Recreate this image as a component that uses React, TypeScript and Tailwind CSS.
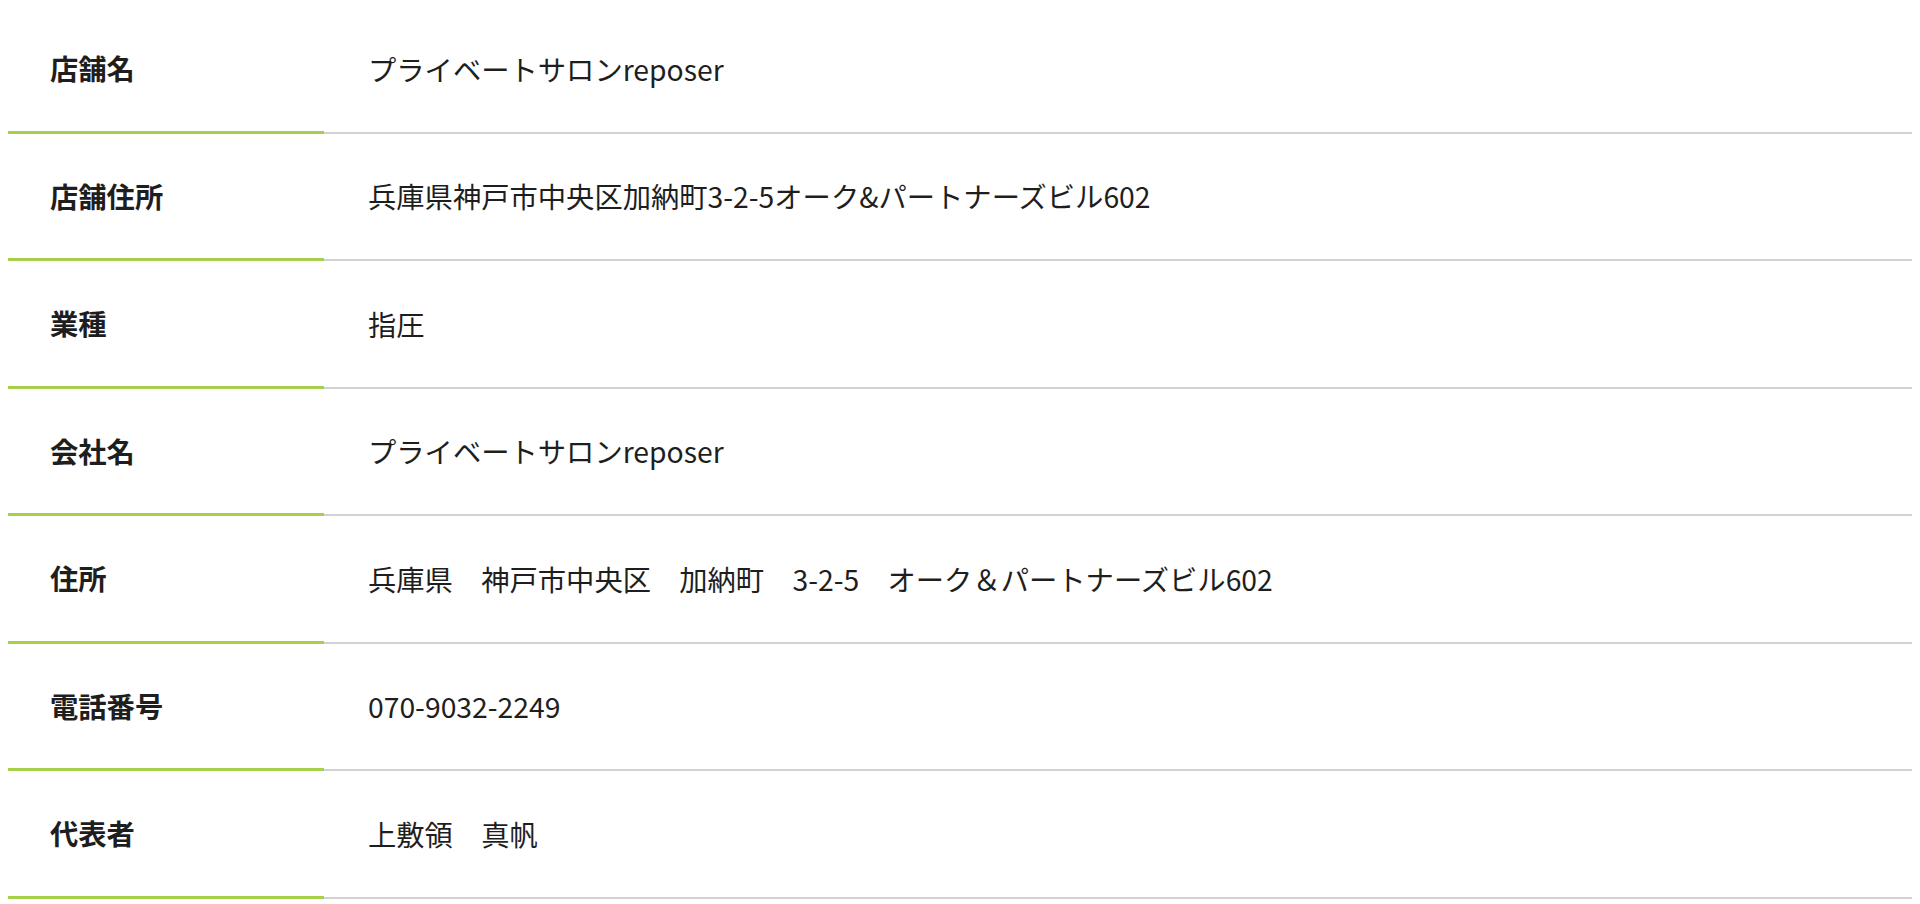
const rows: { label: string; value: string }[] = [
  { label: '店舗名', value: 'プライベートサロンreposer' },
  { label: '店舗住所', value: '兵庫県神戸市中央区加納町3-2-5オーク&パートナーズビル602' },
  { label: '業種', value: '指圧' },
  { label: '会社名', value: 'プライベートサロンreposer' },
  { label: '住所', value: '兵庫県　神戸市中央区　加納町　3-2-5　オーク＆パートナーズビル602' },
  { label: '電話番号', value: '070-9032-2249' },
  { label: '代表者', value: '上敷領　真帆' },
];

export default function App() {
  return (
    <div
      className="min-h-screen bg-white text-[#1e1e1e]"
      style={{ fontFamily: '"Noto Sans CJK JP", "Noto Sans", sans-serif' }}
    >
      <div className="mx-[8px] pt-[6px]">
        {rows.map((r) => (
          <div key={r.label} className="flex h-[127.5px] items-stretch">
            <div className="flex w-[316px] shrink-0 items-center border-b-[3px] border-[#a6cf4a] pl-[42px] text-[28.3px] font-bold leading-[1.5]">
              {r.label}
            </div>
            <div className="flex flex-1 items-center border-b-2 border-[#d2d2d2] pl-[44px] text-[28.3px] leading-[1.5]">
              {r.value}
            </div>
          </div>
        ))}
      </div>
    </div>
  );
}
